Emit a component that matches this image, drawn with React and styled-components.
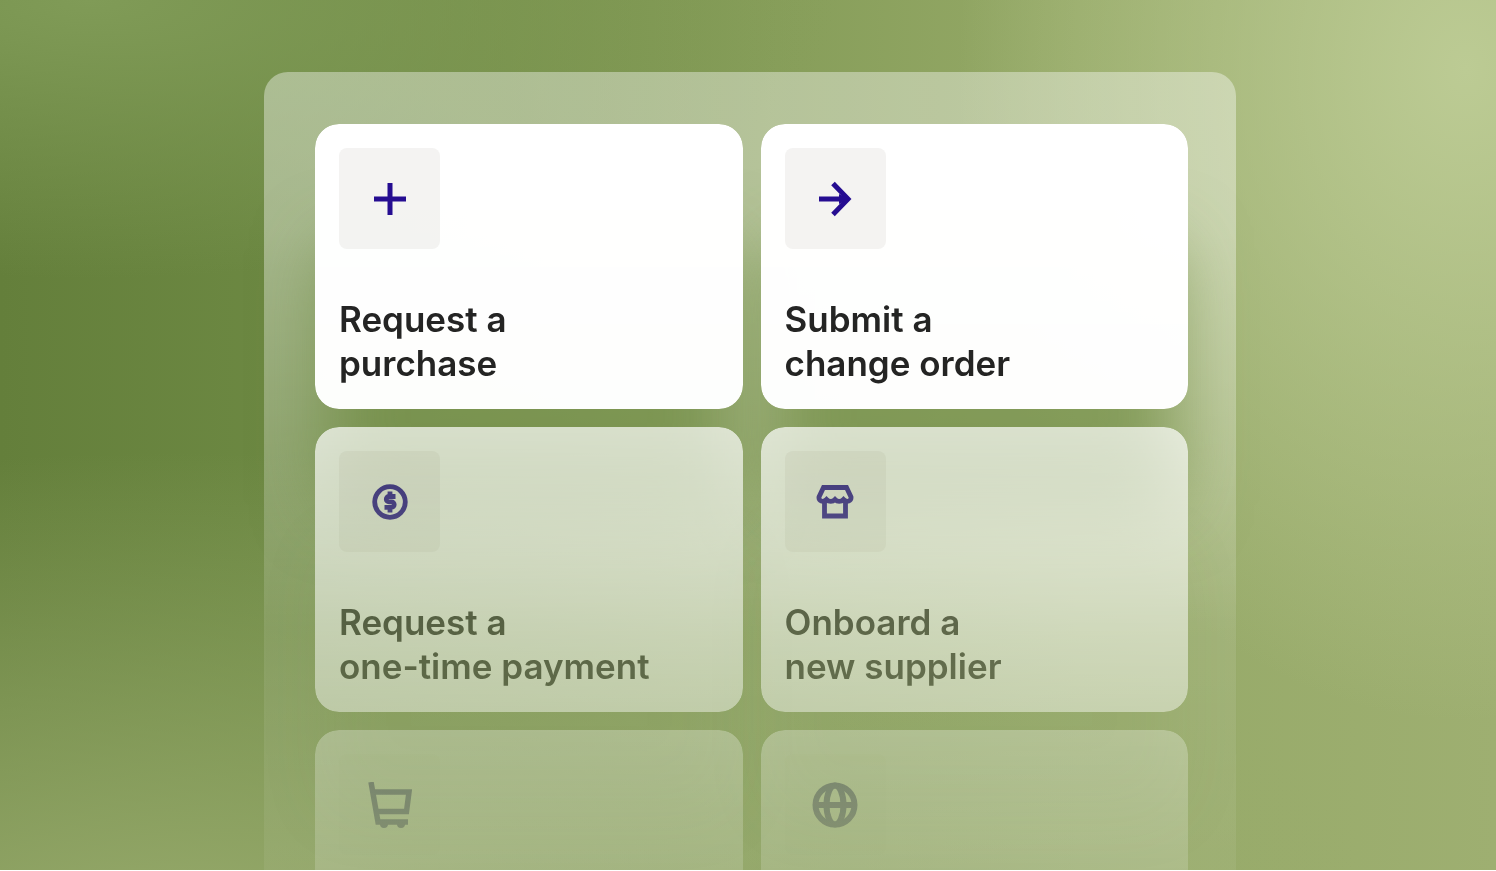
import React from "react";
import styled, { createGlobalStyle } from "styled-components";

const actions = [
  { icon: "plus", lines: ["Request a", "purchase"], from: 1, to: 0.98, shade: 0.6 },
  { icon: "arrow", lines: ["Submit a", "change order"], from: 1, to: 0.98, shade: 0.6 },
  { icon: "dollar", lines: ["Request a", "one-time payment"], from: 0.7, to: 0.42, shade: 0.1 },
  { icon: "store", lines: ["Onboard a", "new supplier"], from: 0.7, to: 0.42, shade: 0.1 },
  { icon: "cart", label: "Shopping cart", from: 0.28, to: 0.04, shade: 0 },
  { icon: "globe", label: "Global", from: 0.28, to: 0.04, shade: 0 },
];

const icons = {
  plus: (
    <svg width="32" height="32" viewBox="0 0 32 32" fill="none" stroke="currentColor" strokeWidth="5">
      <path d="M16 0v32M0 16h32" />
    </svg>
  ),
  arrow: (
    <svg width="34" height="36" viewBox="0 0 34 36" fill="none" stroke="currentColor" strokeWidth="5">
      <path d="M1 18h28M15 2.500l15 15.500-15 15.500" />
      <path d="M21 13l10 5-10 5z" fill="currentColor" stroke="none" />
    </svg>
  ),
  dollar: (
    <svg width="36" height="36" viewBox="0 0 36 36" fill="none" stroke="currentColor" strokeWidth="4.800">
      <circle cx="18" cy="18" r="15.300" />
      <path d="M23.500 12.500h-6.500a2.700 2.700 0 0 0 0 5.400h2.500a2.700 2.700 0 0 1 0 5.400H12.500M18 7.500v5M18 23v5.500" />
    </svg>
  ),
  store: (
    <svg width="38" height="34" viewBox="0 0 38 34" fill="none" stroke="currentColor" strokeWidth="4.800">
      <path d="M7.500 2.500h23L35 12c.5 4-4 6-7.500 2.500-2.500 2.500-6 2.500-8.500 0-2.500 2.500-6 2.500-8.500 0C7 18 2.500 16 3 12z" />
      <path d="M8.500 16v15h21V16" />
    </svg>
  ),
  cart: (
    <svg width="44" height="46" viewBox="0 0 44 46" fill="none" stroke="currentColor" strokeWidth="5.500">
      <path d="M3 0l7 40h30" />
      <path d="M5.500 10H41l-2.500 19.500H9" />
      <path d="M12 42a4 4 0 0 0 8 0M29 42a4 4 0 0 0 8 0" fill="currentColor" stroke="none" />
    </svg>
  ),
  globe: (
    <svg width="46" height="46" viewBox="0 0 46 46" fill="none" stroke="currentColor" strokeWidth="6">
      <circle cx="23" cy="23" r="19.500" />
      <ellipse cx="23" cy="23" rx="8.500" ry="19.500" />
      <path d="M3 23h40" />
    </svg>
  ),
};

export default function App() {
  return (
    <>
      <GlobalStyle />
      <Stage>
        <Panel>
          <Grid>
            {actions.map((action) => (
              <Card key={action.icon} type="button" aria-label={action.label} $shade={action.shade}>
                <CardFace $from={action.from} $to={action.to}>
                  <IconTile $faint={!action.lines}>{icons[action.icon]}</IconTile>
                  {action.lines && (
                    <Title>
                      {action.lines[0]}
                      <br />
                      {action.lines[1]}
                    </Title>
                  )}
                </CardFace>
              </Card>
            ))}
          </Grid>
        </Panel>
      </Stage>
    </>
  );
}

const GlobalStyle = createGlobalStyle`
  * {
    box-sizing: border-box;
  }
  body {
    margin: 0;
    background: #ffffff;
    font-family: Inter, "Liberation Sans", sans-serif;
  }
`;

const Stage = styled.main`
  height: calc(100vh - 1px);
  padding: 72px 260px 0 264px;
  overflow: hidden;
  background:
    radial-gradient(ellipse 34% 75% at 98% 8%, #bccb94 0%, rgba(188, 203, 148, 0) 100%),
    radial-gradient(ellipse 80% 56% at 12% 108%, #97aa6c 0%, rgba(151, 170, 108, 0) 100%),
    radial-gradient(ellipse 50% 32% at 6% 0%, #809b57 0%, rgba(128, 155, 87, 0) 100%),
    linear-gradient(90deg, #647f3b 0%, #6c8842 18%, #78914b 34%, #879e5a 52%, #95a967 72%, #9eaf71 100%);
`;

const Panel = styled.section`
  padding: 52px 48px 0 51px;
  border-radius: 24px;
  background: linear-gradient(180deg, rgba(255, 255, 255, 0.39) 0, rgba(255, 255, 255, 0.39) 160px, rgba(255, 255, 255, 0.24) 400px, rgba(255, 255, 255, 0.1) 560px, rgba(255, 255, 255, 0.06) 800px);
`;

const Grid = styled.div`
  display: grid;
  grid-template-columns: 1fr 1fr;
  gap: 18px;
`;

const Card = styled.button`
  display: flex;
  min-height: 285px;
  padding: 0;
  border: 0;
  border-radius: 24px;
  background: none;
  font: inherit;
  text-align: left;
  box-shadow: 0 110px 70px -12px rgba(100, 130, 52, ${(p) => p.$shade});
  cursor: pointer;
`;

const CardFace = styled.span`
  flex: 1;
  display: flex;
  flex-direction: column;
  justify-content: space-between;
  padding: 24px;
  border-radius: 24px;
  background: #ffffff;
  mask-image: linear-gradient(180deg, rgba(0, 0, 0, ${(p) => p.$from}), rgba(0, 0, 0, ${(p) => p.$to}));
`;

const IconTile = styled.span`
  display: flex;
  align-items: center;
  justify-content: center;
  width: 101px;
  height: 101px;
  border-radius: 8px;
  background: ${(p) => (p.$faint ? "#fafaf9" : "#f4f3f2")};
  color: ${(p) => (p.$faint ? "#3a2c8c" : "#240b91")};
`;

const Title = styled.span`
  color: #222222;
  font-size: 35px;
  font-weight: 600;
  line-height: 44px;
`;
